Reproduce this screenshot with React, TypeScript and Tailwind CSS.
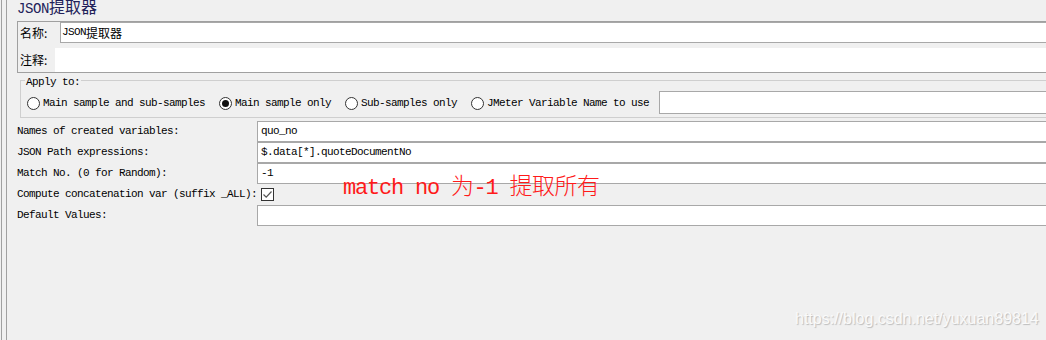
import React from "react";

const M = "font-['Liberation_Mono',monospace] text-[11px] tracking-[-0.6px] text-black";
const C = "font-['Noto_Sans_CJK_SC',sans-serif] text-[12px] text-black";

function Radio({ checked }: { checked?: boolean }) {
  return (
    <span className="flex h-[13px] w-[13px] shrink-0 items-center justify-center rounded-full border border-[#333] bg-white">
      {checked && <span className="h-[7px] w-[7px] rounded-full bg-[#111]" />}
    </span>
  );
}

function Row({ label, children }: { label: string; children: React.ReactNode }) {
  return (
    <div className="flex h-[21px] items-center">
      <span className={`w-[240px] shrink-0 whitespace-pre ${M}`}>{label}</span>
      {children}
    </div>
  );
}

function Field({ value }: { value?: string }) {
  return (
    <div className="mr-[-20px] flex h-[21px] flex-1 items-center border border-[#a8a8a8] bg-white pl-[3px]">
      <span className={`whitespace-pre ${M}`}>{value}</span>
    </div>
  );
}

export default function App() {
  return (
    <div className="relative flex h-[340px] w-[1046px] overflow-hidden bg-[#f0f0f0]">
      <div className="ml-[1px] h-full w-[6px] shrink-0 border-l border-r border-[#a0a0a0]" />
      <div className="flex min-w-0 flex-1 flex-col pl-[10px]">
        {/* title */}
        <div className="h-[21px] overflow-hidden">
          <div className="-mt-[2px] font-['Noto_Sans_CJK_SC',sans-serif] text-[16px] leading-[16px] text-[#22225a] whitespace-pre">
            <span className="font-['Liberation_Mono',monospace] text-[14px] tracking-[-0.4px]">JSON</span>
            <span>提取器</span>
          </div>
        </div>

        {/* name / comment panel */}
        <div className="mr-[-20px] flex flex-col border border-[#a0a0a0]">
          <div className="flex h-[21px] items-center">
            <span className={`w-[42px] shrink-0 whitespace-nowrap pl-[2px] ${C}`}>名称:</span>
            <div className="flex h-[21px] flex-1 items-center border border-[#a8a8a8] bg-white pl-[1px]">
              <span className={`${M}`}>JSON</span>
              <span className={C}>提取器</span>
            </div>
          </div>
          <div className="mt-[5px] flex h-[24px] items-center">
            <span className={`w-[37px] shrink-0 whitespace-nowrap pl-[2px] ${C}`}>注释:</span>
            <div className="h-full flex-1 bg-white" />
          </div>
        </div>

        {/* Apply to */}
        <div className="relative mr-[-20px] ml-[3px] mt-[7px] h-[38px] border border-[#cfcfcf]">
          <span className={`absolute left-[4px] top-[-5px] bg-[#f0f0f0] px-[1px] leading-[12px] ${M}`}>Apply to:</span>
          <div className="mt-[10px] flex h-[25px] items-center pl-[6px]">
            <Radio />
            <span className={`ml-[3px] whitespace-pre ${M}`}>Main sample and sub-samples</span>
            <span className="ml-[14px]" />
            <Radio checked />
            <span className={`ml-[3px] whitespace-pre ${M}`}>Main sample only</span>
            <span className="ml-[14px]" />
            <Radio />
            <span className={`ml-[3px] whitespace-pre ${M}`}>Sub-samples only</span>
            <span className="ml-[14px]" />
            <Radio />
            <span className={`ml-[3px] whitespace-pre ${M}`}>JMeter Variable Name to use</span>
            <div className="ml-[10px] h-[23px] flex-1 self-start border border-[#a8a8a8] bg-white" />
          </div>
        </div>

        {/* fields */}
        <div className="mt-[3px] flex flex-col">
          <Row label="Names of created variables:">
            <Field value="quo_no" />
          </Row>
          <Row label="JSON Path expressions:">
            <Field value="$.data[*].quoteDocumentNo" />
          </Row>
          <Row label="Match No. (0 for Random):">
            <Field value="-1" />
          </Row>
          <Row label="Compute concatenation var (suffix _ALL):">
            <span className="ml-[4px] flex h-[13px] w-[13px] items-center justify-center border border-[#333] bg-white">
              <svg width="11" height="11" viewBox="0 0 11 11">
                <path d="M1.5 5.5 L4.2 8.2 L9.5 2.5" fill="none" stroke="#555" strokeWidth="1.2" />
              </svg>
            </span>
          </Row>
          <Row label="Default Values:">
            <Field />
          </Row>
        </div>
      </div>

      {/* red annotation */}
      <div className="absolute left-[343px] top-[172px] whitespace-pre font-['Liberation_Mono',monospace] text-[22px] leading-[24px] tracking-[-1.2px] text-[#ff1a1a]">
        <span>match no </span>
        <span className="font-['Noto_Sans_CJK_SC',sans-serif] text-[23px] tracking-[-0.5px] font-light">为</span>
        <span>-1 </span>
        <span className="font-['Noto_Sans_CJK_SC',sans-serif] text-[23px] tracking-[-0.5px] font-light">提取所有</span>
      </div>

      {/* watermark */}
      <div className="absolute left-[795px] top-[311px] font-['Liberation_Sans',Arial,sans-serif] text-[16px] leading-[16px] text-[#fafafa] [text-shadow:1px_1px_1px_rgba(0,0,0,0.22)]">
        https://blog.csdn.net/yuxuan89814
      </div>
    </div>
  );
}
